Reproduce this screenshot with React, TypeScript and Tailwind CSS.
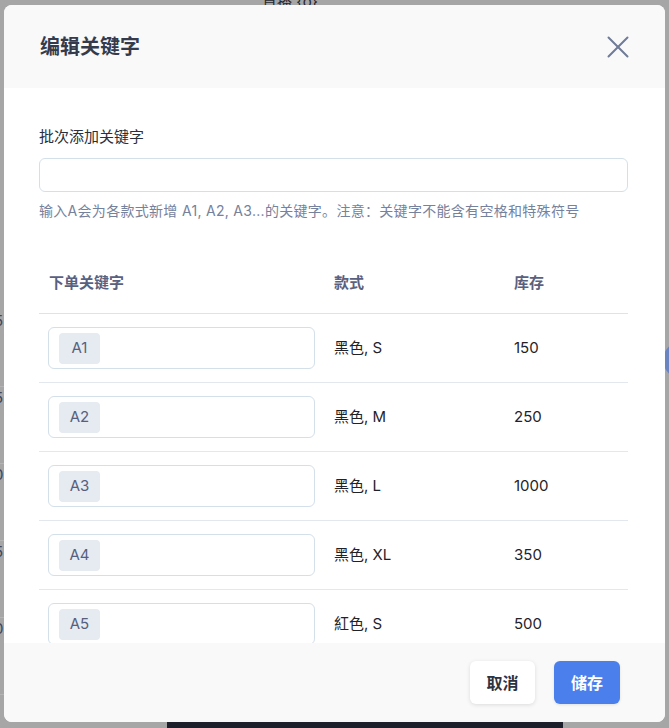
import { X } from 'lucide-react';

const FONT = { fontFamily: 'Inter, "Noto Sans CJK SC", sans-serif' };

const rows = [
  { key: 'A1', style: '黑色, S', stock: '150' },
  { key: 'A2', style: '黑色, M', stock: '250' },
  { key: 'A3', style: '黑色, L', stock: '1000' },
  { key: 'A4', style: '黑色, XL', stock: '350' },
  { key: 'A5', style: '紅色, S', stock: '500' },
];

function KeywordRow({ k, style, stock }: { k: string; style: string; stock: string }) {
  return (
    <div className="flex h-[69px] items-center border-b border-[#e3e8ee]">
      <div className="w-[285px] pl-[9px]">
        <div className="flex h-[42px] w-[267px] items-center rounded-[6px] border border-[#d3dfe9] bg-white px-[10px]">
          <span className="flex h-[31px] w-[41px] items-center justify-center rounded-[4px] bg-[#e6eaf1] text-[15px] text-[#55607e]">
            {k}
          </span>
        </div>
      </div>
      <div className="w-[180px] pl-[10px] text-[15px] text-[#1f2329]">{style}</div>
      <div className="flex-1 pl-[10px] text-[15px] text-[#1f2329]">{stock}</div>
    </div>
  );
}

export default function App() {
  return (
    <div className="relative h-[728px] w-[669px] overflow-hidden bg-[#a6a6a7]" style={FONT}>
      {/* page underneath the overlay */}
      <div className="absolute left-[262px] top-[-9px] text-[15px] text-[#26282e]">直播 {'{o}'}</div>
      <div className="absolute left-[-6px] top-[310px] flex flex-col">
        {['5', '5', '0', '5', '0'].map((d, i) => (
          <div key={i} className="flex h-[77px] items-start border-b border-[#b4b4b6] text-[15px] text-[#3f4660]">
            <span className="w-[10px]">{d}</span>
          </div>
        ))}
      </div>
      <div className="absolute left-[663px] top-[342px] h-[36px] w-[36px] rounded-full bg-[#6a84c2]" />
      <div className="absolute bottom-0 left-[167px] h-[6px] w-[396px] bg-[#1d1f2a]" />

      {/* dialog */}
      <div className="absolute left-[4px] top-[5px] flex h-[717px] w-[661px] flex-col overflow-hidden rounded-[8px] bg-white">
        <div className="flex h-[83px] shrink-0 items-center justify-between bg-[#f9f9fa] pl-[36px] pr-[28px]">
          <h2 className="pt-[1px] text-[20px] font-semibold text-[#363b4c]">编辑关键字</h2>
          <X className="h-[38px] w-[38px] text-[#6f7b97]" strokeWidth={1.25} />
        </div>

        <div className="flex-1 overflow-hidden px-[35px] pt-[38px]">
          <label className="block text-[15px] leading-[22px] text-[#2b2f3a]">批次添加关键字</label>
          <div className="mt-[10px] h-[34px] w-[589px] rounded-[6px] border border-[#d3dfe9] bg-white" />
          <p className="mt-[9px] text-[14px] leading-[20px] tracking-[0.3px] text-[#76819b]">
            输入A会为各款式新增 A1, A2, A3...的关键字。注意：关键字不能含有空格和特殊符号
          </p>

          <div className="mt-[32px] w-[589px]">
            <div className="flex h-[61px] items-center border-b border-[#dde3ea] text-[15px] font-semibold text-[#59617f]">
              <div className="w-[285px] pl-[10px]">下单关键字</div>
              <div className="w-[180px] pl-[10px]">款式</div>
              <div className="flex-1 pl-[10px]">库存</div>
            </div>
            {rows.map((r) => (
              <KeywordRow key={r.key} k={r.key} style={r.style} stock={r.stock} />
            ))}
          </div>
        </div>

        <div className="flex h-[79px] shrink-0 items-center justify-end gap-[19px] bg-[#f9f9f9] pr-[45px]">
          <button className="h-[43px] w-[65px] rounded-[6px] bg-white text-[16px] font-bold text-[#2f3340] shadow-[0_1px_4px_rgba(0,0,0,0.12)]">
            取消
          </button>
          <button className="h-[43px] w-[66px] rounded-[6px] bg-[#4b7fec] text-[16px] font-bold text-white shadow-[0_1px_3px_rgba(0,0,0,0.1)]">
            储存
          </button>
        </div>
      </div>
    </div>
  );
}
